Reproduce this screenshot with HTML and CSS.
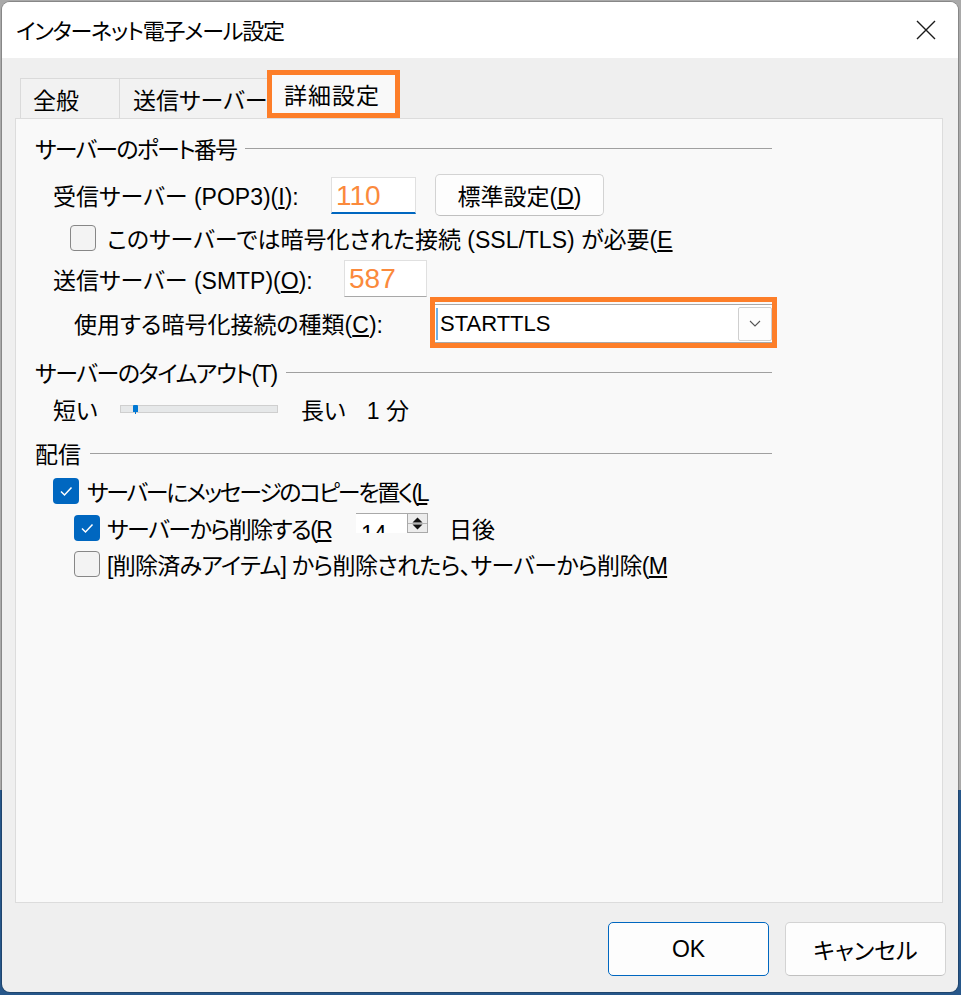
FILE: index.html
```html
<!DOCTYPE html>
<html lang="ja">
<head>
    <meta charset="UTF-8">
    <meta name="viewport" content="width=device-width, initial-scale=1.0">
    <title>インターネット電子メール設定</title>
    <link rel="stylesheet" href="styles.css">
</head>
<body>
    <div class="dialog">
        <div class="titlebar">
            <span class="title">インターネット電子メール設定</span>
            <svg class="close" width="20" height="20" viewBox="0 0 20 20">
                <path d="M1 1 L19 19 M19 1 L1 19" stroke="#1a1a1a" stroke-width="1.4" fill="none"/>
            </svg>
        </div>

        <div class="tabs">
            <div class="tab tab-general">全般</div>
            <div class="tab tab-send">送信サーバー</div>
            <div class="tab active">詳細設定</div>
        </div>

        <div class="panel">
            <div class="group g-port"><span>サーバーのポート番号</span><i class="rule"></i></div>

            <div class="row r-pop">
                <span class="lbl lbl-pop">受信サーバー (POP3)(<u>I</u>):</span>
                <span class="field focus">110</span>
                <button class="btn btn-default">標準設定(<u>D</u>)</button>
            </div>
            <div class="row r-ssl">
                <span class="cb"></span>
                <span class="cb-text">このサーバーでは暗号化された接続 (SSL/TLS) が必要(<u>E</u></span>
            </div>
            <div class="row r-smtp">
                <span class="lbl lbl-smtp">送信サーバー (SMTP)(<u>O</u>):</span>
                <span class="field">587</span>
            </div>
            <div class="row r-enc">
                <span class="lbl lbl-enc">使用する暗号化接続の種類(<u>C</u>):</span>
                <div class="mark">
                    <div class="combo">
                        <i class="caret"></i>
                        <span class="combo-text">STARTTLS</span>
                        <span class="combo-btn">
                            <svg width="12" height="7" viewBox="0 0 12 7"><path d="M1 1 L6 6 L11 1" stroke="#555" stroke-width="1.1" fill="none"/></svg>
                        </span>
                    </div>
                </div>
            </div>

            <div class="group g-timeout"><span>サーバーのタイムアウト(T)</span><i class="rule"></i></div>
            <div class="row r-slider">
                <span class="lbl lbl-short">短い</span>
                <span class="track"><i class="thumb"></i></span>
                <span class="long">長い</span>
                <span class="minutes">1 分</span>
            </div>

            <div class="group g-deliver"><span>配信</span><i class="rule"></i></div>
            <div class="row r-copy">
                <span class="cb checked">
                    <svg width="26" height="26" viewBox="0 0 26 26"><path d="M8 13.5 L11.5 17 L18.5 9.5" stroke="#fff" stroke-width="1.5" fill="none"/></svg>
                </span>
                <span class="cb-text">サーバーにメッセージのコピーを置く(<u>L</u></span>
            </div>
            <div class="row r-remove">
                <span class="cb checked">
                    <svg width="26" height="26" viewBox="0 0 26 26"><path d="M8 13.5 L11.5 17 L18.5 9.5" stroke="#fff" stroke-width="1.5" fill="none"/></svg>
                </span>
                <span class="cb-text">サーバーから削除する(<u>R</u></span>
                <span class="spin">
                    <span class="spin-val">14</span>
                    <span class="spin-btns">
                        <svg width="19" height="18" viewBox="0 0 19 18">
                            <path d="M4.5 8.5 L9.5 3.5 L14.5 8.5 Z" fill="#111"/>
                            <path d="M0 9.5 H19" stroke="#b5b5b5" stroke-width="1"/>
                            <path d="M4.5 10.5 L14.5 10.5 L9.5 15.5 Z" fill="#111"/>
                        </svg>
                    </span>
                </span>
                <span class="days">日後</span>
            </div>
            <div class="row r-deleted">
                <span class="cb"></span>
                <span class="cb-text">[削除済みアイテム] から削除されたら、サーバーから削除(<u>M</u></span>
            </div>
        </div>

        <div class="footer">
            <button class="btn btn-ok">OK</button>
            <button class="btn btn-cancel">キャンセル</button>
        </div>
    </div>
</body>
</html>
```

FILE: styles.css
```css
body {
    margin: 0;
    height: 995px;
    overflow: hidden;
    background: linear-gradient(to bottom, #a9a9a9 0, #a9a9a9 790px, #27578a 790px);
    font-family: "Liberation Sans", "Noto Sans CJK JP", sans-serif;
    font-feature-settings: "palt";
    color: #000;
}
.dialog {
    margin: 2px 0 0 2px;
    width: 956px;
    height: 990px;
    background: #efefef;
    border-radius: 8px;
    overflow: hidden;
    display: flex;
    flex-direction: column;
    box-shadow: 0 0 0 1px rgba(0, 0, 0, 0.2);
}
.titlebar {
    height: 56px;
    flex: none;
    background: #fff;
    display: flex;
    align-items: center;
    justify-content: space-between;
    padding: 0 22px 0 14px;
}
.title {
    font-size: 22px;
    letter-spacing: -1.2px;
    margin-top: -2px;
}

/* tabs */
.tabs {
    display: flex;
    align-items: flex-end;
    height: 48px;
    flex: none;
    margin: 12px 0 0 18px;
}
.tab {
    box-sizing: border-box;
    height: 40px;
    padding-left: 12px;
    border: 1px solid #dadada;
    border-bottom: none;
    background: #f2f2f2;
    font-size: 23px;
    white-space: nowrap;
    display: flex;
    align-items: center;
}
.tab-general {
    width: 100px;
}
.tab-send {
    width: 149px;
    margin-left: -1px;
    padding-left: 13px;
}
.tab.active {
    width: 133px;
    height: 48px;
    margin-left: -1px;
    padding-left: 12px;
    border: 5px solid #fd7e29;
    background: #f9f9f9;
    letter-spacing: 1px;
}

/* page */
.panel {
    flex: 1;
    margin: 0 15px 0 13px;
    background: #f9f9f9;
    border: 1px solid #dcdcdc;
    padding: 14px 19px 0;
}
.group {
    width: 737px;
    height: 30px;
    display: flex;
    align-items: center;
    gap: 9px;
    font-size: 23px;
    white-space: nowrap;
}
.group .rule {
    flex: 1;
    height: 1px;
    background: #a0a0a0;
}
.g-port span {
    letter-spacing: -1.8px;
}
.g-timeout {
    margin-top: 9px;
}
.g-timeout span {
    letter-spacing: -1.4px;
}
.g-deliver {
    margin-top: 14px;
}
.row {
    display: flex;
    align-items: center;
    font-size: 23px;
    white-space: nowrap;
}
.lbl {
    flex: none;
}
.r-pop {
    height: 42px;
    margin-top: 11px;
    padding-left: 18px;
}
.lbl-pop {
    width: 278px;
}
.r-ssl {
    height: 44px;
    padding-left: 35px;
}
.r-smtp {
    height: 37px;
    padding-left: 18px;
}
.lbl-smtp {
    width: 291px;
}
.r-enc {
    height: 51px;
    padding-left: 39px;
}
.lbl-enc {
    width: 356px;
}

/* text boxes */
.field {
    box-sizing: border-box;
    width: 83px;
    height: 37px;
    background: #fff;
    border: 1px solid #e0e0e0;
    border-bottom-color: #a8a8a8;
    padding-left: 4px;
    font-size: 28px;
    line-height: 35px;
    color: #fb8a3c;
}
.field.focus {
    width: 85px;
    height: 37px;
    border-bottom: 2px solid #0067c0;
}
.btn {
    box-sizing: border-box;
    font-family: inherit;
    font-feature-settings: "palt";
    font-size: 23px;
    color: #000;
    background: #fdfdfd;
    border: 1px solid #d3d3d3;
    border-bottom-color: #c0c0c0;
    border-radius: 5px;
    padding: 0;
}
.btn-default {
    width: 169px;
    height: 42px;
    margin-left: 19px;
}

/* combo box with the orange marker */
.mark {
    box-sizing: border-box;
    width: 347px;
    height: 51px;
    border: 5px solid #fd7e29;
}
.combo {
    display: flex;
    align-items: center;
    height: 37px;
    margin-top: 2px;
    background: #fff;
    border-top: 1px solid #a9a9a9;
    border-bottom: 1px solid #a9a9a9;
}
.caret {
    width: 2px;
    height: 32px;
    margin-left: 1px;
    background: #6fb0e6;
}
.combo-text {
    flex: 1;
    margin-left: 2px;
    font-size: 22px;
}
.combo-btn {
    box-sizing: border-box;
    width: 34px;
    height: 34px;
    border: 1px solid #cfcfcf;
    border-radius: 2px;
    background: #fdfdfd;
    display: flex;
    align-items: center;
    justify-content: center;
}

/* slider */
.r-slider {
    height: 30px;
    margin-top: 7px;
    padding-left: 18px;
}
.lbl-short {
    width: 67px;
}
.track {
    box-sizing: border-box;
    position: relative;
    width: 158px;
    height: 8px;
    background: #e6e8e9;
    border: 1px solid #cfcfcf;
}
.thumb {
    position: absolute;
    left: 12px;
    top: -1px;
    width: 5px;
    height: 7px;
    background: #0078d4;
    border-radius: 1px 1px 0 0;
}
.thumb::after {
    content: "";
    position: absolute;
    left: 2px;
    top: 7px;
    width: 1px;
    height: 2px;
    background: #0078d4;
}
.long {
    margin-left: 23px;
}
.minutes {
    margin-left: 21px;
}

/* checkboxes */
.cb {
    box-sizing: border-box;
    flex: none;
    width: 26px;
    height: 26px;
    border: 1.5px solid #878787;
    border-radius: 4px;
    background: #f3f3f3;
}
.cb.checked {
    border: none;
    background: #0067c0;
}
.cb.checked svg {
    display: block;
}
.cb-text {
    margin-left: 11px;
}
.r-copy {
    height: 36px;
    margin-top: 5px;
    padding-left: 18px;
}
.r-copy .cb-text {
    margin-left: 8px;
    letter-spacing: -2.3px;
}
.r-remove {
    height: 37px;
    padding-left: 39px;
}
.r-remove .cb-text {
    width: 230px;
    margin-left: 7px;
    letter-spacing: -1.5px;
}
.r-deleted {
    height: 36px;
    padding-left: 39px;
}
.r-deleted .cb-text {
    margin-left: 7px;
    letter-spacing: -0.7px;
}

/* spinner, its value is cut by the box in the original */
.spin {
    display: flex;
    align-self: flex-start;
    margin: 4px 0 0 19px;
    width: 72px;
    height: 19px;
    overflow: hidden;
    background: #fff;
    border-top: 1px solid #a9a9a9;
}
.spin-val {
    flex: 1;
    padding: 9px 0 0 5px;
    font-size: 23px;
    line-height: 23px;
}
.spin-btns {
    width: 19px;
    border: 1px solid #a9a9a9;
    border-top: none;
    background: #ececec;
}
.spin-btns svg {
    display: block;
}
.days {
    margin-left: 21px;
}

/* bottom buttons */
.footer {
    flex: none;
    height: 89px;
    box-sizing: border-box;
    display: flex;
    justify-content: flex-end;
    gap: 16px;
    padding: 19px 12px 0 0;
}
.btn-ok,
.btn-cancel {
    width: 161px;
    height: 54px;
}
.btn-ok {
    border: 1px solid #0067c0;
}
```
